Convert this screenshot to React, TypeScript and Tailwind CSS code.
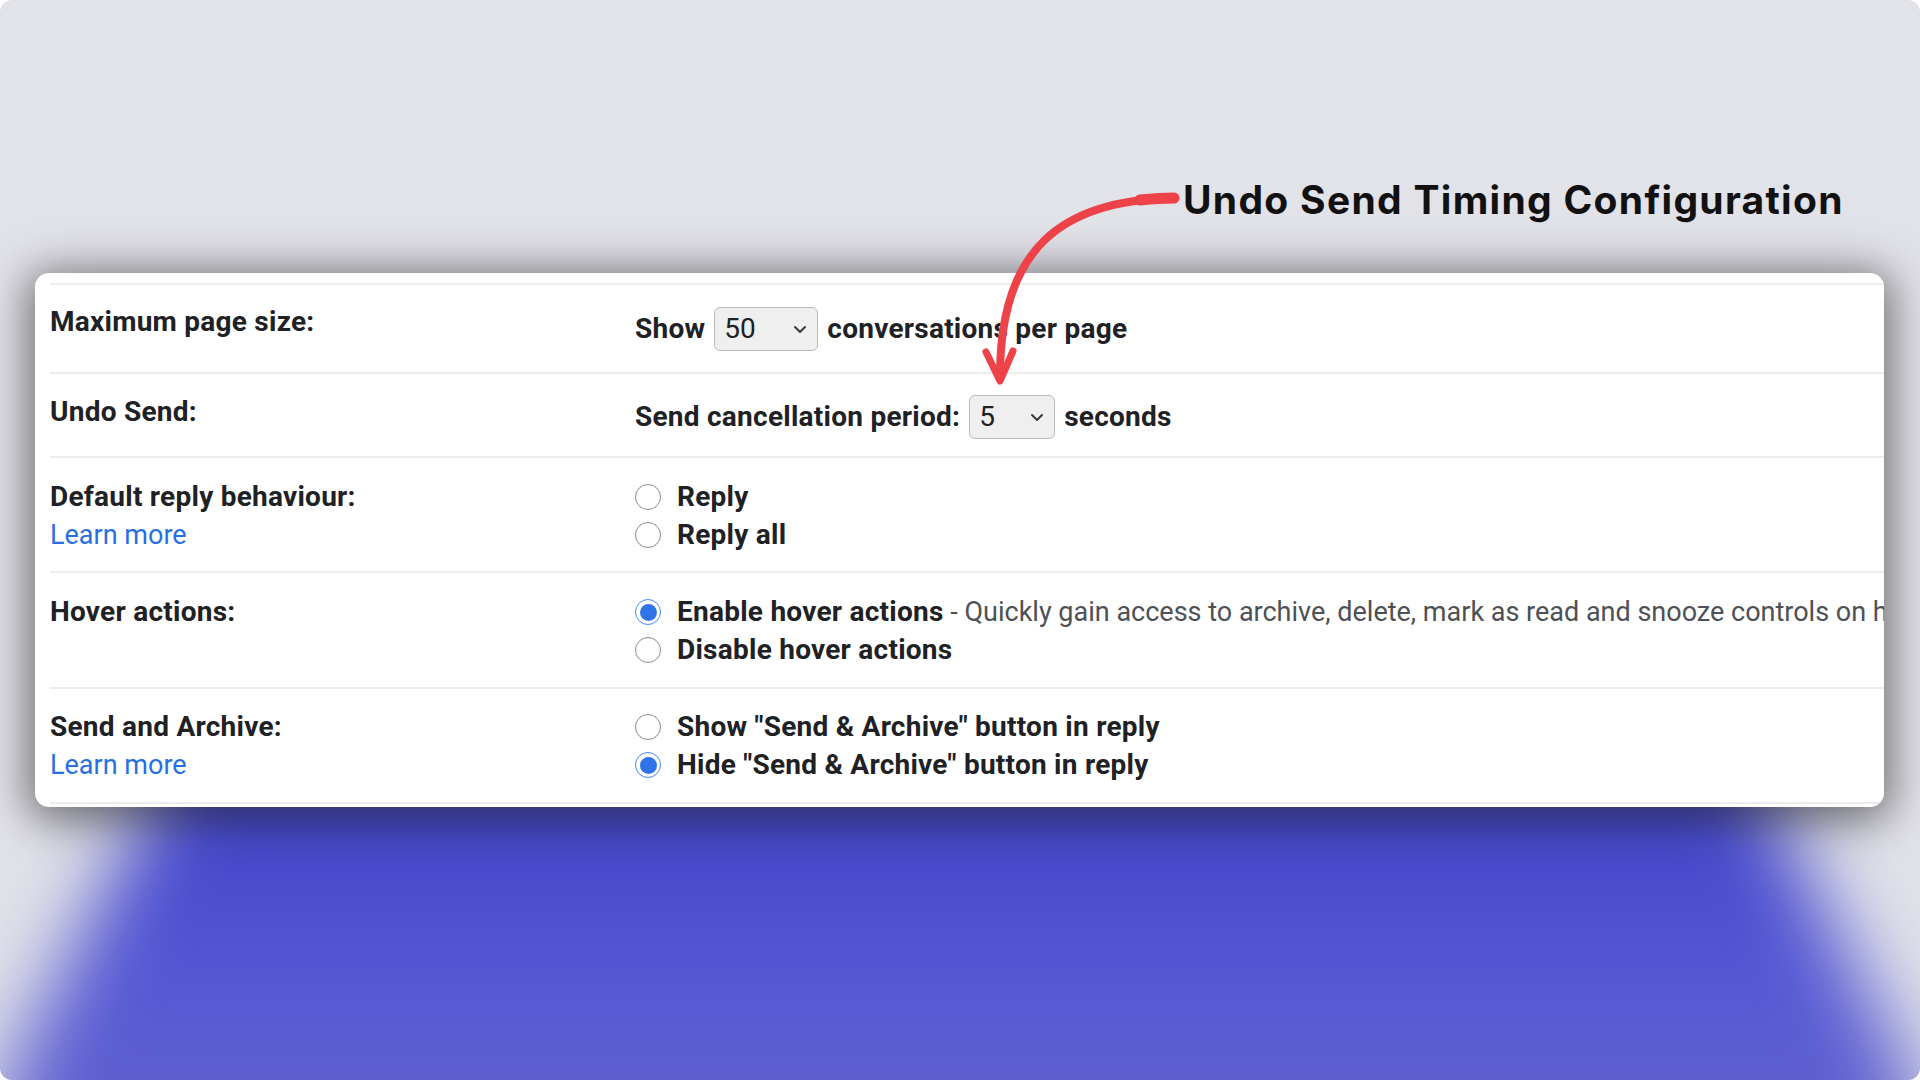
import React from "react";

const roboto = "[font-family:Roboto,'Liberation_Sans',sans-serif]";

function Radio({ checked }: { checked?: boolean }) {
  if (checked) {
    return (
      <span className="w-[26px] h-[26px] rounded-full border-[1.5px] border-[#4a86ee] bg-white flex items-center justify-center shrink-0">
        <span className="w-[17px] h-[17px] rounded-full bg-[#2f74e8]" />
      </span>
    );
  }
  return <span className="w-[26px] h-[26px] rounded-full border-[1.5px] border-[#8c8c8c] bg-white shrink-0" />;
}

function Select({ value, width }: { value: string; width: string }) {
  return (
    <span
      className={`${width} h-[44px] rounded-[6px] border border-[#b9b9b9] bg-[#efefef] flex items-center justify-between pl-[9px] pr-[10px] font-normal tracking-normal text-[#202124]`}
    >
      <span>{value}</span>
      <svg width="14" height="9" viewBox="0 0 14 9" fill="none">
        <polyline points="2,2 7,7 12,2" stroke="#3a3a3a" strokeWidth="2" strokeLinecap="round" strokeLinejoin="round" />
      </svg>
    </span>
  );
}

function RadioLine({ checked, children }: { checked?: boolean; children: React.ReactNode }) {
  return (
    <div className="h-[38px] flex items-center gap-[16px]">
      <Radio checked={checked} />
      <span>{children}</span>
    </div>
  );
}

export default function App() {
  return (
    <div className="w-[1920px] h-[1080px] bg-white">
      <div className="relative w-full h-full rounded-[12px] overflow-hidden bg-[#e2e2e9]">
        {/* blurred blue backdrop */}
        <div className="absolute inset-x-0 top-[760px] bottom-[-120px] blur-[40px]">
          <div className="w-full h-full bg-linear-to-b from-[#3c3fc4] via-[#5558d4] to-[#6767cc] [clip-path:polygon(9%_0,91%_0,103%_100%,-3%_100%)]" />
        </div>

        <div className="relative z-10 flex flex-col pt-[181px]">
          <div className="pl-[1183px] h-[38px] leading-[38px] text-[39px] font-bold tracking-[1.3px] text-[#111111] [font-family:Inter,sans-serif] whitespace-nowrap">
            Undo Send Timing Configuration
          </div>

          <div
            className={`mt-[54px] ml-[35px] mr-[36px] rounded-[14px] bg-white overflow-hidden shadow-[0_6px_44px_8px_rgba(0,0,0,0.5)] pt-[10px] pb-[3px] ${roboto} text-[28px] text-[#202124]`}
          >
            <div className="ml-[15px] border-t-2 border-[#ececec] font-bold tracking-[0.25px]">
              {/* Row 1 */}
              <div className="flex border-b-2 border-[#ececec]">
                <div className="w-[585px] shrink-0 pt-[18px] leading-[38px]">Maximum page size:</div>
                <div className="flex-1 pt-[22px] pb-[21px] flex items-center gap-[9px] whitespace-nowrap">
                  <span>Show</span>
                  <Select value="50" width="w-[104px]" />
                  <span>conversations per page</span>
                </div>
              </div>
              {/* Row 2 */}
              <div className="flex border-b-2 border-[#ececec]">
                <div className="w-[585px] shrink-0 pt-[19px] leading-[38px]">Undo Send:</div>
                <div className="flex-1 pt-[21px] pb-[17px] flex items-center gap-[9px] whitespace-nowrap">
                  <span>Send cancellation period:</span>
                  <Select value="5" width="w-[86px]" />
                  <span>seconds</span>
                </div>
              </div>
              {/* Row 3 */}
              <div className="flex border-b-2 border-[#ececec]">
                <div className="w-[585px] shrink-0 pt-[20px] pb-[17px] leading-[38px]">
                  <div>Default reply behaviour:</div>
                  <div className="font-normal tracking-normal text-[27px] text-[#2a6fe0]">Learn more</div>
                </div>
                <div className="flex-1 pt-[20px] pb-[17px] whitespace-nowrap">
                  <RadioLine>Reply</RadioLine>
                  <RadioLine>Reply all</RadioLine>
                </div>
              </div>
              {/* Row 4 */}
              <div className="flex border-b-2 border-[#ececec]">
                <div className="w-[585px] shrink-0 pt-[20px] pb-[18px] leading-[38px]">Hover actions:</div>
                <div className="flex-1 min-w-0 pt-[20px] pb-[18px] whitespace-nowrap">
                  <RadioLine checked>
                    Enable hover actions
                    <span className="font-normal tracking-normal text-[27px] text-[#4d5156]">
                      {" "}- Quickly gain access to archive, delete, mark as read and snooze controls on hover
                    </span>
                  </RadioLine>
                  <RadioLine>Disable hover actions</RadioLine>
                </div>
              </div>
              {/* Row 5 */}
              <div className="flex border-b-2 border-[#ececec]">
                <div className="w-[585px] shrink-0 pt-[19px] pb-[18px] leading-[38px]">
                  <div>Send and Archive:</div>
                  <div className="font-normal tracking-normal text-[27px] text-[#2a6fe0]">Learn more</div>
                </div>
                <div className="flex-1 pt-[19px] pb-[18px] whitespace-nowrap">
                  <RadioLine>Show "Send &amp; Archive" button in reply</RadioLine>
                  <RadioLine checked>Hide "Send &amp; Archive" button in reply</RadioLine>
                </div>
              </div>
            </div>
          </div>
        </div>

        {/* annotation arrow */}
        <svg
          className="absolute inset-0 z-20 pointer-events-none"
          width="1920"
          height="1080"
          viewBox="0 0 1920 1080"
          fill="none"
        >
          <path
            d="M1174 198 C1060 200 1000 250 1000 376"
            stroke="#ec4248"
            strokeWidth="8"
            strokeLinecap="round"
          />
          <path d="M1174 198 C1160 198 1150 199 1140 200" stroke="#ec4248" strokeWidth="11" strokeLinecap="round" />
          <polyline
            points="986,352 1000,381 1013,351"
            stroke="#ec4248"
            strokeWidth="7"
            strokeLinecap="round"
            strokeLinejoin="round"
          />
        </svg>
      </div>
    </div>
  );
}
